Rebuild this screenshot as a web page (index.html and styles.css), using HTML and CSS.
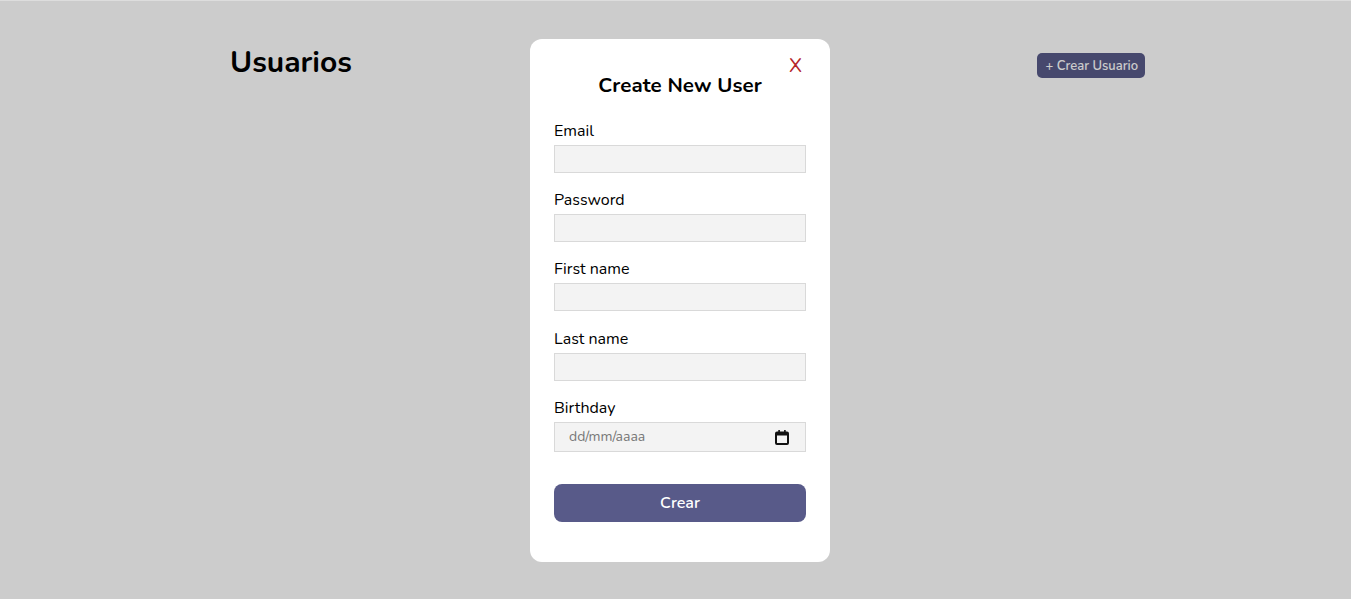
FILE: index.html
```html
<!DOCTYPE html>
<html lang="es">
<head>
<meta charset="utf-8">
<title>Usuarios</title>
<link rel="stylesheet" href="styles.css">
</head>
<body>
<div class="page">
  <header class="header">
    <h1 class="title">Usuarios</h1>
    <button class="create-btn">+ Crear Usuario</button>
  </header>
</div>
<div class="overlay">
  <div class="modal">
    <button class="close">X</button>
    <h2 class="modal-title">Create New User</h2>
    <form class="form">
      <div class="group">
        <label class="label">Email</label>
        <input class="field" type="text">
      </div>
      <div class="group">
        <label class="label">Password</label>
        <input class="field" type="password">
      </div>
      <div class="group">
        <label class="label">First name</label>
        <input class="field" type="text">
      </div>
      <div class="group">
        <label class="label">Last name</label>
        <input class="field" type="text">
      </div>
      <div class="group">
        <label class="label">Birthday</label>
        <div class="date-wrap">
          <input class="field date" type="text" placeholder="dd/mm/aaaa">
          <svg class="cal" width="14" height="15" viewBox="0 0 14 15" aria-hidden="true">
            <rect x="1" y="2.5" width="12" height="11.5" rx="1" fill="none" stroke="#111" stroke-width="2"/>
            <rect x="1" y="2" width="12" height="3.5" fill="#111"/>
            <rect x="3.3" y="0" width="1.6" height="3" fill="#111"/>
            <rect x="9.1" y="0" width="1.6" height="3" fill="#111"/>
          </svg>
        </div>
      </div>
      <button class="submit" type="button">Crear</button>
    </form>
  </div>
</div>
</body>
</html>
```

FILE: styles.css
```css
* { box-sizing: border-box; }
html, body { margin: 0; padding: 0; }
body {
  font-family: Nunito, "Noto Sans", sans-serif;
  background: #fff;
  color: #000;
  width: 1351px;
  height: 599px;
  overflow: hidden;
}
.page { padding: 0 206px 0 230px; }
.header {
  display: flex;
  justify-content: space-between;
  align-items: flex-start;
  padding-top: 42px;
}
.title {
  margin: 0;
  font-size: 30px;
  font-weight: 700;
  line-height: 42px;
}
.create-btn {
  margin-top: 11px;
  height: 25px;
  padding: 0 7px 0 8px;
  border: none;
  border-radius: 5px;
  background: #585a89;
  color: #fff;
  font-family: inherit;
  font-size: 13px;
  font-weight: 600;
}
.overlay {
  position: fixed;
  inset: 0;
  background: rgba(0, 0, 0, 0.2);
  border-top: 1px solid #ddd;
  display: flex;
  justify-content: center;
  align-items: flex-start;
  padding-top: 38px;
  padding-left: 9px;
}
.modal {
  position: relative;
  width: 300px;
  height: 523px;
  background: #fff;
  border-radius: 12px;
  padding: 24px 24px;
}
.close {
  position: absolute;
  top: 14px;
  right: 28px;
  border: none;
  background: none;
  padding: 0;
  color: #b5252b;
  font-family: inherit;
  font-size: 20px;
  line-height: 26px;
}
.modal-title {
  margin: 8px 0 21px;
  text-align: center;
  font-size: 20.5px;
  font-weight: 700;
  line-height: 28px;
  letter-spacing: 0.1px;
}
.form { display: flex; flex-direction: column; }
.group { display: flex; flex-direction: column; margin-bottom: 16.2px; }
.label {
  font-size: 16px;
  line-height: 22px;
  margin-bottom: 3px;
}
.field {
  height: 28px;
  border: 1px solid #d9d9d9;
  background: #f3f3f3;
  font-family: inherit;
  font-size: 14px;
  padding: 0 14px;
  outline: none;
}
.date-wrap { position: relative; }
.field.date { width: 100%; height: 30px; }
.field.date::placeholder { color: #777; }
.cal {
  position: absolute;
  right: 17px;
  top: 8px;
}
.submit {
  margin-top: 16px;
  height: 38px;
  border: none;
  border-radius: 8px;
  background: #585a89;
  color: #fff;
  font-family: inherit;
  font-size: 16px;
  font-weight: 600;
}
```
